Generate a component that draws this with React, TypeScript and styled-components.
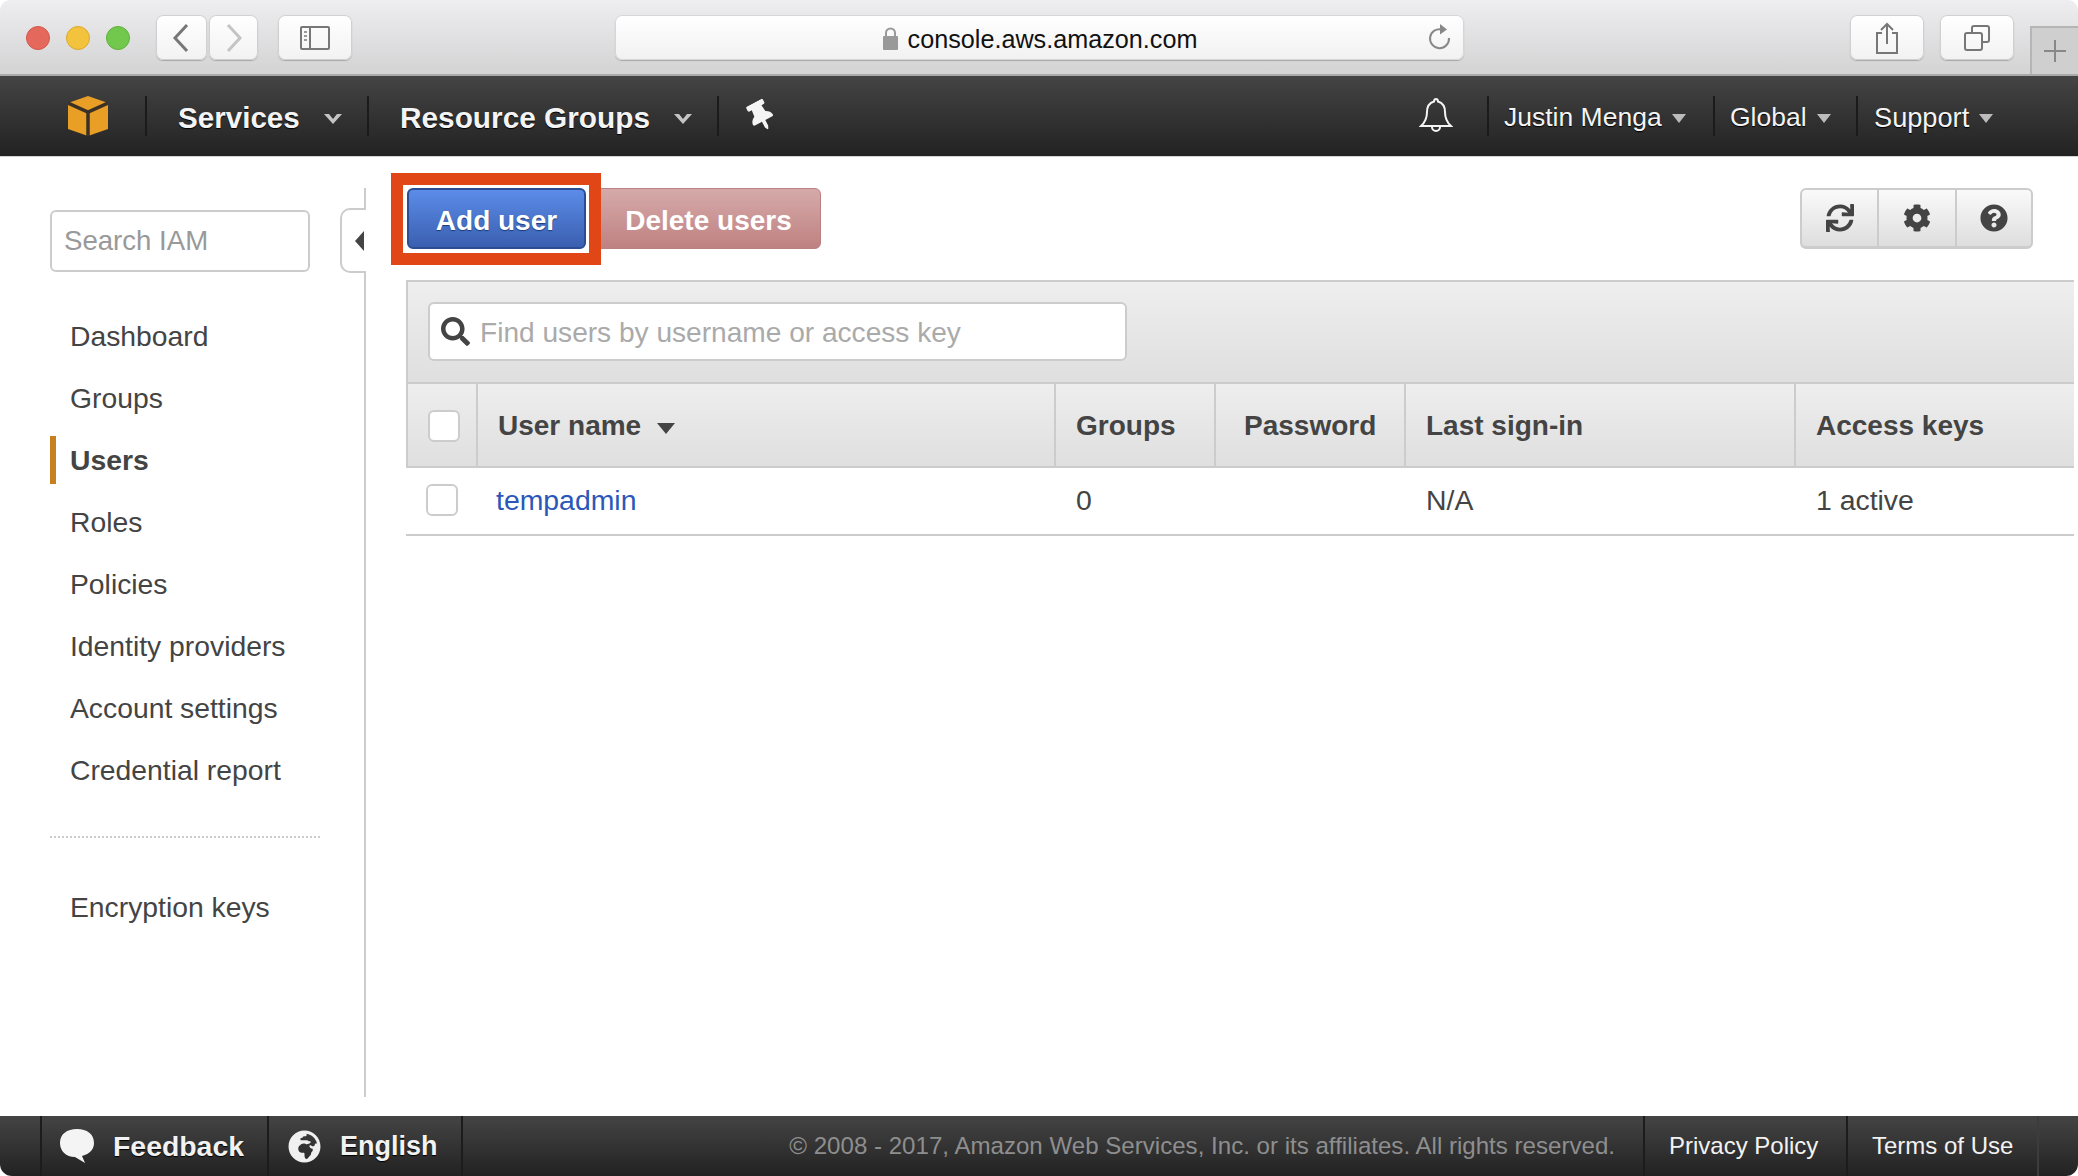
import React from "react";
import styled, { createGlobalStyle } from "styled-components";
import { FaCog, FaGlobeAfrica, FaQuestionCircle, FaSearch, FaSync, FaThumbtack } from "react-icons/fa";

const Global = createGlobalStyle`
  html, body { margin: 0; padding: 0; background: #fff; }
  * { box-sizing: border-box; }
  body { font-family: "Liberation Sans", Arial, sans-serif; color: #444; }
`;

const Page = styled.div`
  width: 2078px; height: 1176px; display: flex; flex-direction: column; overflow: hidden;
  border-radius: 10px 10px 12px 12px; background: #fff;
`;

/* browser chrome */
const BrowserBar = styled.header`
  height: 76px; flex: none; display: flex; align-items: flex-start; padding: 15px 0 0 26px;
  background: linear-gradient(#eeeef0, #d3d3d4); border-bottom: 2px solid #a9a9a9;
`;
const Lights = styled.div`display: flex; gap: 16px; margin: 11px 26px 0 0;`;
const Light = styled.span<{ $c: string; $b: string }>`
  width: 24px; height: 24px; border-radius: 50%; background: ${p => p.$c}; border: 1px solid ${p => p.$b};
`;
const ChromeBtn = styled.div<{ $w: number; $ml?: number }>`
  width: ${p => p.$w}px; height: 45px; margin-left: ${p => p.$ml ?? 0}px; flex: none;
  display: flex; align-items: center; justify-content: center; border-radius: 7px;
  background: linear-gradient(#fff, #f2f2f2); box-shadow: 0 1px 1px #a8a8a8, 0 0 0 1px #d0d0d0 inset;
`;
const AddressBar = styled.div`
  width: 849px; height: 45px; margin-left: 263px; flex: none; position: relative;
  display: flex; align-items: center; justify-content: center; gap: 9px; padding: 3px 0 0 0; border-radius: 7px;
  background: linear-gradient(#fff, #f1f1f1); box-shadow: 0 1px 1px #a8a8a8, 0 0 0 1px #d6d6d6 inset;
  font-size: 25.2px; color: #111;
`;
const Reload = styled.span`position: absolute; right: 11px; top: 8px; display: flex;`;
const PlusTab = styled.div`
  width: 48px; height: 48px; margin: 11px 0 0 16px; flex: none; display: flex; align-items: center; justify-content: center;
  background: #cfcfcf; border-left: 2px solid #b5b5b5; border-top: 2px solid #b5b5b5;
`;

/* AWS nav */
const NavBar = styled.nav`
  height: 81px; flex: none; display: flex; align-items: center; padding: 0 0 0 68px;
  background: linear-gradient(#444, #222); border-bottom: 1px solid #d4d4d4;
`;
const Logo = styled.div`width: 77px; height: 40px; flex: none; display: flex;`;
const NavItem = styled.div<{ $w: number; $pad: number; $bold?: boolean; $size: number; $gap: number }>`
  width: ${p => p.$w}px; height: 40px; flex: none; display: flex; align-items: center; gap: ${p => p.$gap}px;
  padding: 3px 0 0 ${p => p.$pad}px; border-left: 2px solid #1b1b1b; color: #f4f4f4;
  font-size: ${p => p.$size}px; font-weight: ${p => (p.$bold ? 700 : 400)}; text-shadow: 0 1px 1px #000; white-space: nowrap;
`;
const PinItem = styled.div`
  width: 60px; height: 40px; flex: none; display: flex; align-items: center; padding-left: 27px;
  border-left: 2px solid #1b1b1b; color: #f4f4f4;
  svg { transform: rotate(-28deg); }
`;
const Bell = styled.div`margin-left: auto; width: 68px; flex: none; display: flex;`;
const Caret = styled.span<{ $w: number }>`
  flex: none; width: 0; height: 0; margin-top: 1px; border-style: solid; border-color: #bbb transparent transparent;
  border-width: ${p => p.$w * 0.6}px ${p => p.$w / 2}px 0;
`;
const Chevron = styled.svg`flex: none; width: 18px; height: 11px; margin-top: 1px;`;

/* body */
const Main = styled.main`flex: 1; min-height: 0; display: flex;`;
const Sidebar = styled.aside`
  width: 366px; flex: none; margin: 31px 0 19px; padding: 22px 0 0 50px; position: relative; border-right: 2px solid #ccc;
`;
const SideSearch = styled.div`
  width: 260px; height: 62px; display: flex; align-items: center; padding-left: 12px; border: 2px solid #ccc; border-radius: 6px;
  font-size: 27.6px; color: #999;
`;
const CollapseTab = styled.div`
  position: absolute; right: -2px; top: 20px; width: 26px; height: 65px; background: #fff;
  border: 2px solid #ccc; border-right: 0; border-radius: 10px 0 0 10px; display: flex; align-items: center; justify-content: flex-end; padding-right: 2px;
  &::after { content: ""; border-style: solid; border-width: 10px 9px 10px 0; border-color: transparent #444 transparent transparent; }
`;
const SideList = styled.ul`list-style: none; margin: 33px 0 0; padding: 0;`;
const SideItem = styled.li<{ $active?: boolean }>`
  height: 62px; display: flex; align-items: center; padding-left: 20px; font-size: 28.3px; position: relative; color: #444;
  font-weight: ${p => (p.$active ? 700 : 400)};
  ${p => p.$active && `&::before { content: ""; position: absolute; left: 0; top: 7px; width: 6px; height: 48px; background: #c87f1f; }`}
`;
const SideRule = styled.hr`width: 270px; margin: 35px 0 38px; border: 0; border-top: 2px dotted #ccc;`;
const Content = styled.section`flex: 1; min-width: 0; padding: 31px 4px 0 40px;`;
const Toolbar = styled.div`display: flex; align-items: center; height: 61px; margin-bottom: 31px; padding: 0 41px 0 1px;`;
const AddButton = styled.div`
  width: 179px; height: 61px; padding-top: 4px; position: relative; display: flex; align-items: center; justify-content: center; z-index: 1;
  border-radius: 6px; border: 2px solid #2c4d91; color: #fff; font-size: 28px; font-weight: 700; text-shadow: 0 1px 1px #1c3a78;
  background: linear-gradient(#5b8ce8, #3a5fb0);
`;
const Highlight = styled.span`
  position: absolute; left: -18px; right: -17px; top: -17px; bottom: -18px; border: 12px solid #e04616;
  box-shadow: inset 0 0 0 3px #fff;
`;
const DeleteButton = styled.div`
  width: 230px; height: 61px; margin-left: 5px; padding: 4px 0 0 5px; display: flex; align-items: center; justify-content: center;
  border-radius: 6px; border: 1px solid #bb8080; color: #fff; font-size: 28px; font-weight: 700;
  background: linear-gradient(#d6aaaa, #bf8181);
`;
const IconGroup = styled.div`
  margin-left: auto; display: flex; height: 61px; border: 2px solid #ccc; border-bottom-width: 3px; border-radius: 6px;
  background: linear-gradient(#fafafa, #dedede); overflow: hidden;
`;
const IconCell = styled.div<{ $w: number; $first?: boolean }>`
  width: ${p => p.$w}px; display: flex; align-items: center; justify-content: center; color: #444; font-size: 28px;
  ${p => !p.$first && "border-left: 2px solid #ccc;"}
`;
const FilterBar = styled.div`
  height: 102px; padding: 20px 0 0 20px; border-top: 2px solid #ccc; border-left: 2px solid #ccc; background: linear-gradient(#eee, #dfdfdf);
`;
const FilterInput = styled.div`
  width: 699px; height: 59px; display: flex; align-items: center; gap: 10px; padding: 2px 0 0 11px; background: #fff;
  border: 2px solid #ccc; border-radius: 6px; font-size: 28.1px; color: #aaa; svg { color: #444; flex: none; margin-top: -2px; }
`;
const Row = styled.div<{ $head?: boolean }>`
  display: grid; grid-template-columns: ${p => (p.$head ? 70 : 71)}px 578px 160px 190px 390px 1fr; color: #444;
  font-size: ${p => (p.$head ? 28 : 28.4)}px;
  font-weight: ${p => (p.$head ? 700 : 400)};
  height: ${p => (p.$head ? 86 : 68)}px;
  border-bottom: 2px solid #ccc;
  ${p => p.$head ? "border-top: 2px solid #ccc; border-left: 2px solid #ccc; background: linear-gradient(#eee, #dfdfdf);" : "padding-bottom: 2px;"}
`;
const Cell = styled.div<{ $head?: boolean; $pad?: number }>`
  display: flex; align-items: center; gap: 16px; padding-left: ${p => p.$pad ?? 20}px;
  ${p => p.$head && "padding-top: 2px; border-right: 2px solid #ccc; &:last-child { border-right: 0; }"}
`;
const Check = styled.span`
  width: 32px; height: 32px; flex: none; background: #fff; border: 2px solid #ccc; border-radius: 6px;
`;
const UserLink = styled.a`color: #2b58b8; text-decoration: none;`;
const SortArrow = styled.span`
  width: 0; height: 0; margin-top: 4px; border-style: solid; border-width: 11px 9px 0; border-color: #444 transparent transparent;
`;

/* footer */
const Footer = styled.footer`
  height: 60px; flex: none; display: flex; align-items: stretch; padding-left: 40px;
  background: linear-gradient(#444, #222); color: #f2f2f2; font-size: 24px;
`;
const FootItem = styled.div<{ $w: number; $pad: number; $gap?: number }>`
  width: ${p => p.$w}px; flex: none; display: flex; align-items: center; gap: ${p => p.$gap ?? 0}px; padding-left: ${p => p.$pad}px;
  border-left: 2px solid #1c1c1c; white-space: nowrap;
`;
const FootLabel = styled.span<{ $size: number }>`
  font-weight: 700; font-size: ${p => p.$size}px; text-shadow: 0 1px 1px #000;
`;
const Copyright = styled.div`
  flex: 1; display: flex; align-items: center; justify-content: flex-end; padding-right: 28px; border-left: 2px solid #1c1c1c; color: #8e8e8e; font-size: 24.1px; white-space: nowrap;
`;
const FootEnd = styled.div`width: 41px; flex: none; border-left: 2px solid #3c3c3c;`;

const sideItems = ["Dashboard", "Groups", "Users", "Roles", "Policies", "Identity providers", "Account settings", "Credential report"];

const NavChevron = () => (
  <Chevron viewBox="0 0 18 11"><path d="M0 1h5l4 5 4-5h5l-9 10z" fill="#c4c4c4" /></Chevron>
);

export default function App() {
  return (
    <Page>
      <Global />
      <BrowserBar>
        <Lights>
          <Light $c="#e5685c" $b="#d4574b" />
          <Light $c="#f3c33e" $b="#dba92b" />
          <Light $c="#72c84c" $b="#5fb13b" />
        </Lights>
        <ChromeBtn $w={51}>
          <svg width="20" height="30" viewBox="0 0 20 30"><path d="M15 2 3 15l12 13" fill="none" stroke="#777" strokeWidth="3" /></svg>
        </ChromeBtn>
        <ChromeBtn $w={49} $ml={2}>
          <svg width="20" height="30" viewBox="0 0 20 30"><path d="M4 2l12 13L4 28" fill="none" stroke="#c4c4c4" strokeWidth="3" /></svg>
        </ChromeBtn>
        <ChromeBtn $w={74} $ml={20}>
          <svg width="30" height="24" viewBox="0 0 30 24">
            <rect x="1" y="1" width="28" height="22" rx="1" fill="none" stroke="#777" strokeWidth="2" />
            <path d="M10 1v22" stroke="#777" strokeWidth="2" />
            <path d="M4 6h3M4 10h3M4 14h3" stroke="#999" strokeWidth="2" />
          </svg>
        </ChromeBtn>
        <AddressBar>
          <svg width="17" height="23" viewBox="0 0 17 23" style={{ marginBottom: 2 }}>
            <path d="M4 10V6a4.500 4.500 0 0 1 9 0v4" fill="none" stroke="#999" strokeWidth="2" />
            <rect x="1" y="9" width="15" height="14" rx="1" fill="#999" />
          </svg>
          <span>console.aws.amazon.com</span>
          <Reload>
            <svg width="26" height="28" viewBox="0 0 26 28">
              <path d="M15 6.500A9.500 9.500 0 1 0 22 15" fill="none" stroke="#888" strokeWidth="2" />
              <path d="M13 1l7 5.500-7 5z" fill="#888" />
            </svg>
          </Reload>
        </AddressBar>
        <ChromeBtn $w={74} $ml={386}>
          <svg width="24" height="32" viewBox="0 0 24 32">
            <path d="M7 11H2v20h20V11h-5" fill="none" stroke="#777" strokeWidth="2" />
            <path d="M12 22V2M6 8l6-6 6 6" fill="none" stroke="#777" strokeWidth="2" />
          </svg>
        </ChromeBtn>
        <ChromeBtn $w={74} $ml={16}>
          <svg width="26" height="26" viewBox="0 0 26 26">
            <rect x="1" y="8" width="17" height="17" rx="2" fill="none" stroke="#777" strokeWidth="2" />
            <path d="M8 8V3a2 2 0 0 1 2-2h13a2 2 0 0 1 2 2v12a2 2 0 0 1-2 2h-5" fill="none" stroke="#777" strokeWidth="2" />
          </svg>
        </ChromeBtn>
        <PlusTab>
          <svg width="22" height="22" viewBox="0 0 22 22"><path d="M11 0v22M0 11h22" stroke="#888" strokeWidth="2" /></svg>
        </PlusTab>
      </BrowserBar>

      <NavBar>
        <Logo>
          <svg width="40" height="40" viewBox="0 0 40 40">
            <path d="M20 0 40 7v26l-20 7-20-7V7z" fill="#e99f25" />
            <path d="M0 7l20 9 20-9M20 16v24" fill="none" stroke="#3a3026" strokeWidth="3.500" />
          </svg>
        </Logo>
        <NavItem $w={222} $pad={31} $bold $size={29.6} $gap={24}>Services<NavChevron /></NavItem>
        <NavItem $w={350} $pad={31} $bold $size={29.8} $gap={24}>Resource Groups<NavChevron /></NavItem>
        <PinItem><FaThumbtack size={30} /></PinItem>
        <Bell>
          <svg width="34" height="36" viewBox="0 0 34 36">
            <path d="M17 1c1.500 0 2 1 2 2.500 5 1.500 7 5 7 10.500 0 6 1.500 10 6 14H2c4.500-4 6-8 6-14 0-5.500 2-9 7-10.500C15 2 15.500 1 17 1z" fill="none" stroke="#f4f4f4" strokeWidth="2" />
            <path d="M13 29a4 4 0 0 0 8 0" fill="none" stroke="#f4f4f4" strokeWidth="2" />
          </svg>
        </Bell>
        <NavItem $w={226} $pad={15} $size={26.5} $gap={10}>Justin Menga<Caret $w={15} /></NavItem>
        <NavItem $w={143} $pad={15} $size={26.5} $gap={10}>Global<Caret $w={15} /></NavItem>
        <NavItem $w={222} $pad={16} $size={27.2} $gap={10}>Support<Caret $w={15} /></NavItem>
      </NavBar>

      <Main>
        <Sidebar>
          <CollapseTab />
          <SideSearch>Search IAM</SideSearch>
          <SideList>
            {sideItems.map(s => <SideItem key={s} $active={s === "Users"}>{s}</SideItem>)}
          </SideList>
          <SideRule />
          <SideItem>Encryption keys</SideItem>
        </Sidebar>
        <Content>
          <Toolbar>
            <AddButton>Add user<Highlight /></AddButton>
            <DeleteButton>Delete users</DeleteButton>
            <IconGroup>
              <IconCell $w={75} $first><FaSync /></IconCell>
              <IconCell $w={78}><FaCog /></IconCell>
              <IconCell $w={76}><FaQuestionCircle /></IconCell>
            </IconGroup>
          </Toolbar>
          <FilterBar>
            <FilterInput><FaSearch size={29} />Find users by username or access key</FilterInput>
          </FilterBar>
          <Row $head>
            <Cell $head><Check /></Cell>
            <Cell $head>User name<SortArrow /></Cell>
            <Cell $head>Groups</Cell>
            <Cell $head $pad={28}>Password</Cell>
            <Cell $head>Last sign-in</Cell>
            <Cell $head>Access keys</Cell>
          </Row>
          <Row>
            <Cell $pad={20}><Check /></Cell>
            <Cell $pad={19}><UserLink>tempadmin</UserLink></Cell>
            <Cell $pad={21}>0</Cell>
            <Cell />
            <Cell $pad={21}>N/A</Cell>
            <Cell $pad={21}>1 active</Cell>
          </Row>
        </Content>
      </Main>

      <Footer>
        <FootItem $w={227} $pad={17} $gap={18}>
          <svg width="36" height="34" viewBox="0 0 36 34"><path d="M18 0C8 0 1 5 1 14c0 8 6 14 15 14l10 6-3-7c8-2 12-7 12-13C35 5 28 0 18 0z" fill="#f4f4f4" /></svg>
          <FootLabel $size={28.4}>Feedback</FootLabel>
        </FootItem>
        <FootItem $w={194} $pad={19} $gap={19}><FaGlobeAfrica size={33} color="#f0f0f0" /><FootLabel $size={27}>English</FootLabel></FootItem>
        <Copyright>© 2008 - 2017, Amazon Web Services, Inc. or its affiliates. All rights reserved.</Copyright>
        <FootItem $w={203} $pad={24}>Privacy Policy</FootItem>
        <FootItem $w={191} $pad={24}>Terms of Use</FootItem>
        <FootEnd />
      </Footer>
    </Page>
  );
}
